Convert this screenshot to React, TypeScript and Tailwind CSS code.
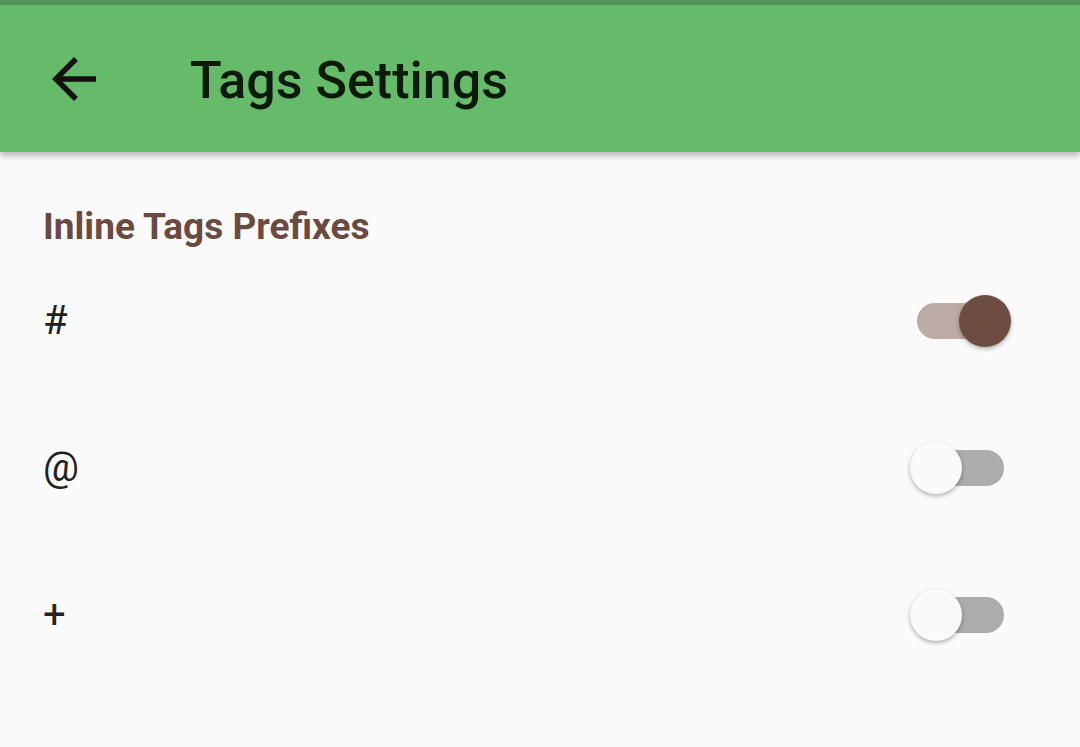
import React, { useState } from 'react';

const font = { fontFamily: 'Roboto, "Noto Sans", sans-serif' };

// Material-style switch, sized like the Android screenshot
const Toggle: React.FC<{ on: boolean; onChange: () => void }> = ({ on, onChange }) => (
  <button onClick={onChange} className="relative w-[87px] h-[52px] flex items-center">
    <div className={`w-[87px] h-[36px] rounded-full ${on ? 'bg-[#bcaaa4]' : 'bg-[#acacac]'}`} />
    <div
      className={`absolute top-0 w-[52px] h-[52px] rounded-full shadow-[0_2px_4px_rgba(0,0,0,0.3)] ${
        on ? 'left-[42px] bg-[#6d4c41]' : 'left-[-7px] bg-[#fafafa]'
      }`}
    />
  </button>
);

export default function App() {
  const [prefixes, setPrefixes] = useState([
    { label: '#', on: true },
    { label: '@', on: false },
    { label: '+', on: false },
  ]);

  const toggle = (i: number) =>
    setPrefixes((p) => p.map((x, j) => (j === i ? { ...x, on: !x.on } : x)));

  return (
    <div style={font} className="w-[1080px] h-[747px] bg-[#fafafa] overflow-hidden">
      {/* status strip + app bar */}
      <div className="h-[5px] bg-[#51935a]" />
      <div className="relative z-10 h-[147px] bg-[#66bb6a] flex items-center shadow-[0_4px_6px_rgba(0,0,0,0.25)]">
        <svg viewBox="0 0 24 24" className="ml-[41px] w-[66px] h-[66px]" fill="#111">
          <path d="M20 11H7.83l5.59-5.59L12 4l-8 8 8 8 1.41-1.41L7.83 13H20v-2z" />
        </svg>
        <h1 className="ml-[83px] mt-[4px] text-[52px] font-medium text-[#0c1a0c] leading-none">Tags Settings</h1>
      </div>

      {/* section */}
      <div className="pt-[55px]">
        <h2 className="px-[43px] text-[37px] font-bold text-[#6b4a41] leading-[40px]">
          Inline Tags Prefixes
        </h2>
        <div className="mt-[48px]">
          {prefixes.map((p, i) => (
            <div key={p.label} className="h-[147px] flex items-start">
              <div className="flex-1 flex items-center justify-between pl-[43px] pr-[76px] h-[52px]">
                <span className="text-[40px] text-[#212121] leading-none">{p.label}</span>
                <Toggle on={p.on} onChange={() => toggle(i)} />
              </div>
            </div>
          ))}
        </div>
      </div>
    </div>
  );
}
